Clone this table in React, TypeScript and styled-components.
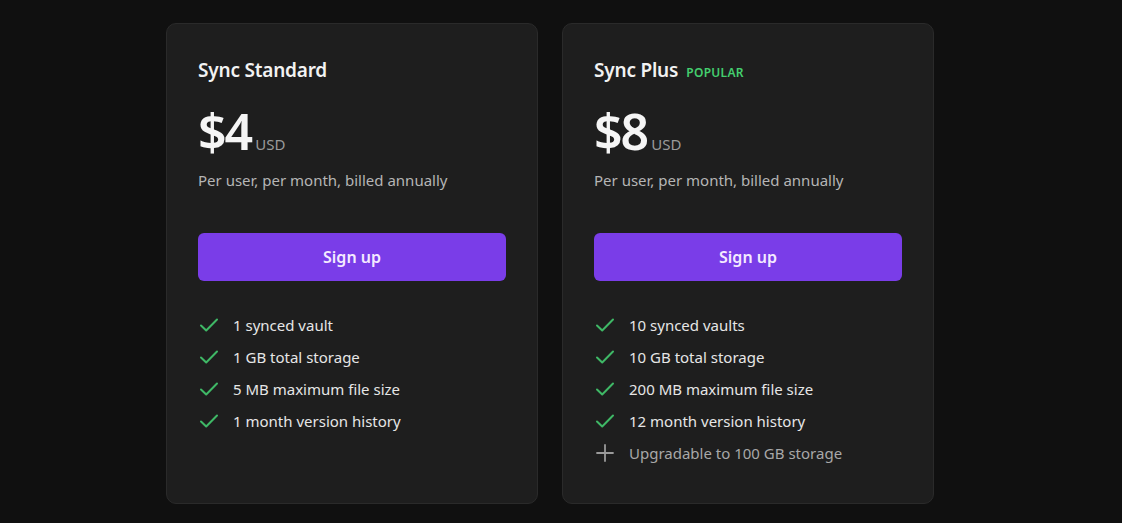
import React from "react";
import styled, { createGlobalStyle } from "styled-components";

const Global = createGlobalStyle`
  html, body { margin: 0; padding: 0; background: #101010; }
  body { font-family: "Noto Sans", "Open Sans", sans-serif; color: #dcddde; }
  * { box-sizing: border-box; }
`;

const Page = styled.div`
  display: flex;
  justify-content: center;
  align-items: stretch;
  gap: 24px;
  padding-top: 23px;
  padding-right: 22px;
  padding-bottom: 19px;
  min-height: 523px;
`;

const Card = styled.div`
  width: 372px;
  height: 481px;
  background: #1e1e1e;
  border: 1px solid #2a2a2a;
  border-radius: 10px;
  padding: 31px 31px;
  display: flex;
  flex-direction: column;
`;

const TitleRow = styled.div`
  display: flex;
  align-items: baseline;
  gap: 8px;
  height: 30px;
  line-height: 30px;
`;

const Title = styled.h2`
  margin: 0;
  font-size: 19px;
  font-weight: 600;
  color: #f2f2f2;
  letter-spacing: -0.2px;
`;

const Badge = styled.span`
  font-size: 12px;
  font-weight: 600;
  color: #44cf6e;
  letter-spacing: 0.3px;
`;

const PriceRow = styled.div`
  display: flex;
  align-items: baseline;
  margin-top: 16px;
  gap: 4px;
  height: 60px;
`;

const Amount = styled.span`
  font-size: 50px;
  font-weight: 600;
  color: #f5f5f5;
  letter-spacing: -2px;
  line-height: 60px;
`;

const Currency = styled.span`
  font-size: 15px;
  color: #9a9a9a;
`;

const Note = styled.p`
  margin: 8px 0 0;
  font-size: 15px;
  line-height: 22px;
  color: #b5b5b5;
`;

const Button = styled.button`
  margin-top: 42px;
  height: 48px;
  width: 100%;
  border: none;
  border-radius: 6px;
  background: #7a3de8;
  color: #f3eaff;
  font-family: inherit;
  font-size: 16px;
  font-weight: 600;
  cursor: pointer;
`;

const Features = styled.ul`
  list-style: none;
  margin: 28px 0 0;
  padding: 0;
  display: flex;
  flex-direction: column;
`;

const Feature = styled.li<{ $muted?: boolean }>`
  display: flex;
  align-items: center;
  height: 32px;
  gap: 14px;
  font-size: 15px;
  color: ${(p) => (p.$muted ? "#a8a8a8" : "#e6e6e6")};
`;

const IconBox = styled.span`
  width: 21px;
  display: flex;
  justify-content: center;
  align-items: center;
`;

const Check = () => (
  <svg width="20" height="16" viewBox="0 0 20 16" fill="none">
    <path d="M2 8.5 L7.2 13.5 L18 2.5" stroke="#3fb866" strokeWidth="2" strokeLinecap="round" strokeLinejoin="round" />
  </svg>
);

const Plus = () => (
  <svg width="18" height="18" viewBox="0 0 18 18" fill="none">
    <path d="M9 1 V17 M1 9 H17" stroke="#9a9a9a" strokeWidth="1.8" strokeLinecap="round" />
  </svg>
);

type Plan = {
  name: string;
  badge?: string;
  price: string;
  features: string[];
  extras?: string[];
};

const plans: Plan[] = [
  {
    name: "Sync Standard",
    price: "$4",
    features: ["1 synced vault", "1 GB total storage", "5 MB maximum file size", "1 month version history"],
  },
  {
    name: "Sync Plus",
    badge: "POPULAR",
    price: "$8",
    features: ["10 synced vaults", "10 GB total storage", "200 MB maximum file size", "12 month version history"],
    extras: ["Upgradable to 100 GB storage"],
  },
];

export default function App() {
  return (
    <>
      <Global />
      <Page>
        {plans.map((p) => (
          <Card key={p.name}>
            <TitleRow>
              <Title>{p.name}</Title>
              {p.badge && <Badge>{p.badge}</Badge>}
            </TitleRow>
            <PriceRow>
              <Amount>{p.price}</Amount>
              <Currency>USD</Currency>
            </PriceRow>
            <Note>Per user, per month, billed annually</Note>
            <Button>Sign up</Button>
            <Features>
              {p.features.map((f) => (
                <Feature key={f}>
                  <IconBox><Check /></IconBox>
                  {f}
                </Feature>
              ))}
              {p.extras?.map((f) => (
                <Feature key={f} $muted>
                  <IconBox><Plus /></IconBox>
                  {f}
                </Feature>
              ))}
            </Features>
          </Card>
        ))}
      </Page>
    </>
  );
}
